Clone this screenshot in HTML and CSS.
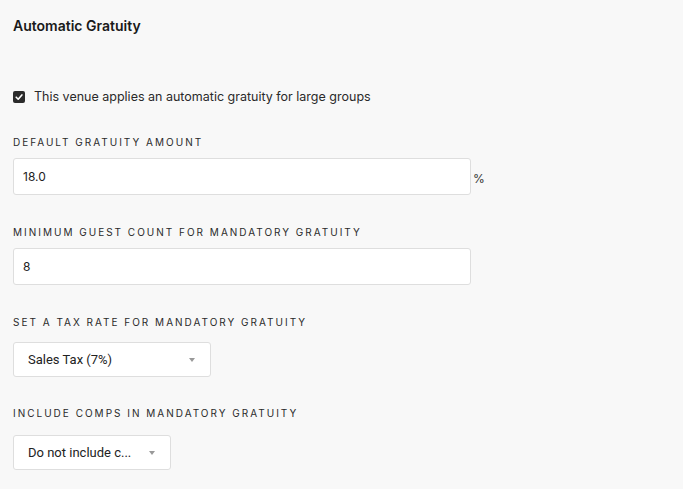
FILE: index.html
```html
<!DOCTYPE html>
<html>
<head>
<meta charset="utf-8">
<link rel="stylesheet" href="styles.css">
</head>
<body>
<div class="page">
  <h2 class="title">Automatic Gratuity</h2>
  <label class="check">
    <span class="box"><svg width="10" height="10" viewBox="0 0 10 10"><path d="M2.2 5.2 L4.2 7.2 L7.9 2.9" fill="none" stroke="#fff" stroke-width="1.6" stroke-linecap="round" stroke-linejoin="round"/></svg></span>
    <span>This venue applies an automatic gratuity for large groups</span>
  </label>
  <div class="field f1">
    <div class="label">DEFAULT GRATUITY AMOUNT</div>
    <div class="row">
      <div class="input wide">18.0</div>
      <span class="unit">%</span>
    </div>
  </div>
  <div class="field f2">
    <div class="label">MINIMUM GUEST COUNT FOR MANDATORY GRATUITY</div>
    <div class="input wide">8</div>
  </div>
  <div class="field f3">
    <div class="label">SET A TAX RATE FOR MANDATORY GRATUITY</div>
    <div class="select s1"><span>Sales Tax (7%)</span><span class="caret"></span></div>
  </div>
  <div class="field f4">
    <div class="label">INCLUDE COMPS IN MANDATORY GRATUITY</div>
    <div class="select s2"><span>Do not include c...</span><span class="caret"></span></div>
  </div>
</div>
</body>
</html>
```
FILE: styles.css
```css
html, body { margin: 0; padding: 0; background: #f8f8f8; }
body { font-family: Inter, "Noto Sans", sans-serif; color: #1f1f1f; }
.page { padding: 17px 13px 0 13px; }
.title { margin: 0; font-size: 14px; font-weight: 600; line-height: 18px; color: #1a1a1a; }
.check { display: flex; align-items: center; gap: 9px; margin-top: 54px; font-size: 12.5px; line-height: 16px; color: #2a2a2a; }
.box { width: 12px; height: 12px; border-radius: 2px; background: #2b2b2b; display: flex; align-items: center; justify-content: center; }
.box svg { display: block; }
.field { display: flex; flex-direction: column; }
.f1 { margin-top: 31px; }
.f2 { margin-top: 31px; }
.f3 { margin-top: 31px; }
.f4 { margin-top: 30px; }
.label { font-size: 10px; letter-spacing: 2px; line-height: 12px; color: #2a2a2a; margin-bottom: 10px; }
.row { display: flex; align-items: center; gap: 2px; }
.input { box-sizing: border-box; height: 37px; background: #fff; border: 1px solid #dedede; border-radius: 3px; padding: 0 9px; display: flex; align-items: center; font-size: 12px; color: #222; }
.wide { width: 458px; }
.unit { font-size: 12px; color: #333; padding-top: 3px; }
.select { box-sizing: border-box; height: 35px; background: #fff; border: 1px solid #dedede; border-radius: 3px; padding: 0 15px 0 14px; display: flex; align-items: center; justify-content: space-between; font-family: Roboto, "Noto Sans", sans-serif; font-size: 13px; color: #222; }
.s1 { width: 198px; margin-top: 4px; }
.s2 { width: 158px; margin-top: 6px; }
.caret { width: 0; height: 0; border-left: 3.5px solid transparent; border-right: 3.5px solid transparent; border-top: 4px solid #999; }
```
